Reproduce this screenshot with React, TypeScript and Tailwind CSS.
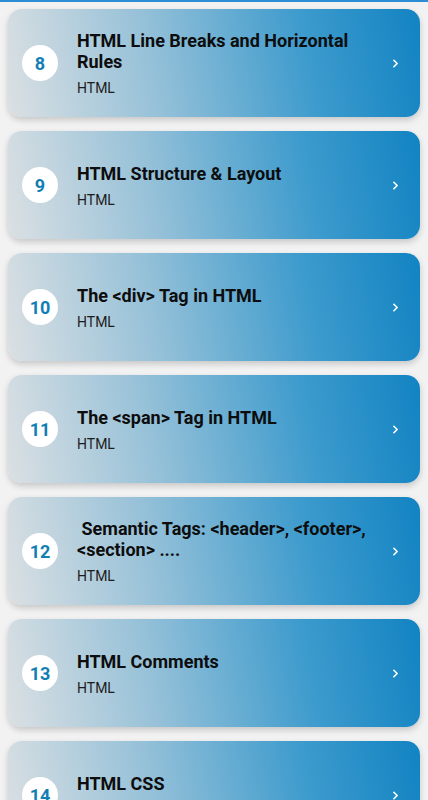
import { ChevronRight } from "lucide-react";

type Lesson = {
  num: number;
  title: string;
  tag: string;
};

const lessons: readonly Lesson[] = [
  { num: 8, title: "HTML Line Breaks and Horizontal Rules", tag: "HTML" },
  { num: 9, title: "HTML Structure & Layout", tag: "HTML" },
  { num: 10, title: "The <div> Tag in HTML", tag: "HTML" },
  { num: 11, title: "The <span> Tag in HTML", tag: "HTML" },
  { num: 12, title: " Semantic Tags: <header>, <footer>, <section> ....", tag: "HTML" },
  { num: 13, title: "HTML Comments", tag: "HTML" },
  { num: 14, title: "HTML CSS", tag: "HTML" },
];

function LessonCard({ lesson }: { lesson: Lesson }) {
  return (
    <div className="flex h-[108px] shrink-0 items-center rounded-[14px] bg-[linear-gradient(80deg,#dbe0e3_0%,#94c0d8_36%,#3d9bcd_72%,#1283c2_100%)] pl-[14px] pr-[18px] shadow-[0_3px_6px_rgba(0,0,0,0.18)]">
      <div className="flex h-9 w-9 shrink-0 items-center justify-center rounded-full bg-white text-[18px] font-bold text-[#137eb4]">
        {lesson.num}
      </div>
      <div className="ml-[19px] flex-1 pr-4">
        <p className="whitespace-pre-wrap text-[18px] leading-[21px] font-bold text-[#0d0d0d]">{lesson.title}</p>
        <p className="mt-[8px] text-[14px] leading-4 text-[#1c1c1c]">{lesson.tag}</p>
      </div>
      <ChevronRight className="h-[13px] w-[13px] text-white" strokeWidth={3} />
    </div>
  );
}

export default function App() {
  return (
    <div className="h-[800px] overflow-hidden bg-[#f2f2f2] font-['Roboto',sans-serif]">
      <div className="h-[2px] bg-[#2b8ed4]" />
      <div className="flex flex-col gap-[14px] px-2 pt-[7px]">
        {lessons.map((lesson) => (
          <LessonCard key={lesson.num} lesson={lesson} />
        ))}
      </div>
    </div>
  );
}
